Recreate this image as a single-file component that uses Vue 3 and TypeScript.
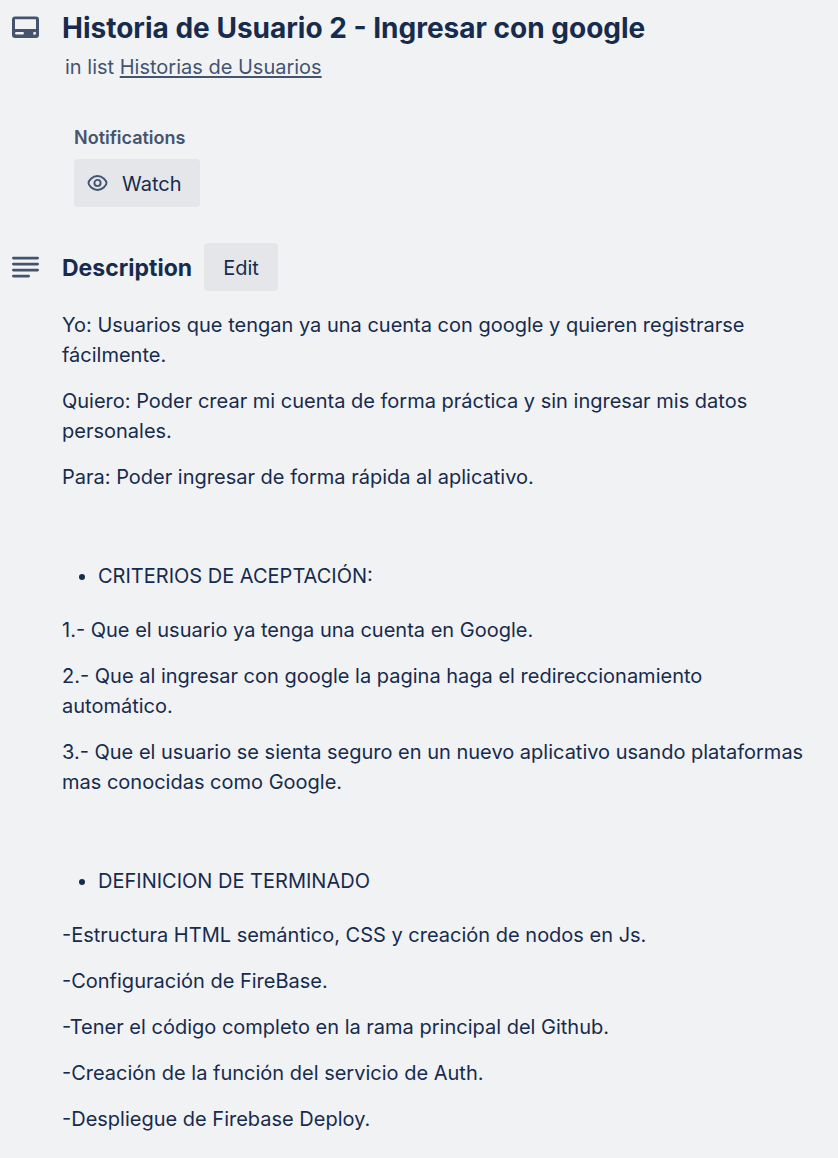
<script setup lang="ts">
const story: string[] = [
  'Yo: Usuarios que tengan ya una cuenta con google y quieren registrarse fácilmente.',
  'Quiero: Poder crear mi cuenta de forma práctica y sin ingresar mis datos personales.',
  'Para: Poder ingresar de forma rápida al aplicativo.',
]
const criteria: string[] = [
  '1.- Que el usuario ya tenga una cuenta en Google.',
  '2.- Que al ingresar con google la pagina haga el redireccionamiento automático.',
  '3.- Que el usuario se sienta seguro en un nuevo aplicativo usando plataformas mas conocidas como Google.',
]
const done: string[] = [
  '-Estructura HTML semántico, CSS y creación de nodos en Js.',
  '-Configuración de FireBase.',
  '-Tener el código completo en la rama principal del Github.',
  '-Creación de la función del servicio de Auth.',
  '-Despliegue de Firebase Deploy.',
]
</script>

<template>
  <main class="card">
    <header class="row">
      <svg class="icon title-icon" viewBox="0 0 28 24" aria-hidden="true">
        <path
          fill="currentColor"
          fill-rule="evenodd"
          d="M3 1.600H24Q27 1.600 27 4.600V19.900Q27 22.900 24 22.900H3Q0 22.900 0 19.900V4.600Q0 1.600 3 1.600ZM3 4.300V14H24V4.300ZM4.400 17Q3 17 3 18.300T4.400 19.600H10.600Q12 19.600 12 18.300T10.600 17ZM22.600 16.800A1.500 1.500 0 1 0 22.600 19.800A1.500 1.500 0 1 0 22.600 16.800Z"
        />
      </svg>
      <div>
        <h1>Historia de Usuario 2 - Ingresar con google</h1>
        <p class="list">in list <a href="#">Historias de Usuarios</a></p>
      </div>
    </header>

    <section class="notifications">
      <h3>Notifications</h3>
      <button type="button" class="button watch">
        <svg viewBox="0 0 22 18" aria-hidden="true">
          <path
            d="M2.500 8C2.500 6 6.200 1 11.500 1S20.500 6 20.500 8S16.800 15 11.500 15S2.500 10 2.500 8Z"
            fill="none"
            stroke="currentColor"
            stroke-width="1.900"
          />
          <circle cx="11.500" cy="8" r="3.100" fill="none" stroke="currentColor" stroke-width="1.900" />
        </svg>
        Watch
      </button>
    </section>

    <section>
      <div class="row heading">
        <svg class="icon" viewBox="0 0 28 24" aria-hidden="true">
          <path d="M1.400 3.100H25.600M1.400 9.100H25.600M1.400 15.100H25.600M1.400 21.100H16.600" stroke="currentColor" stroke-width="2.800" stroke-linecap="round" />
        </svg>
        <h2>Description</h2>
        <button type="button" class="button edit">Edit</button>
      </div>
      <div class="body">
        <p v-for="text in story" :key="text">{{ text }}</p>
        <ul><li>CRITERIOS DE ACEPTACIÓN:</li></ul>
        <p v-for="text in criteria" :key="text">{{ text }}</p>
        <ul><li>DEFINICION DE TERMINADO</li></ul>
        <p v-for="text in done" :key="text">{{ text }}</p>
      </div>
    </section>
  </main>
</template>

<style>
body {
  margin: 0;
  background: #f1f2f4;
}
</style>

<style scoped>
.card {
  box-sizing: border-box;
  min-height: 100vh;
  padding: 8px 24px 8px 12px;
  background: #f1f2f4;
  color: #172b4d;
  font: 20px/30px Inter, sans-serif;
}
h1, h2, h3, p, ul { margin: 0; }
.row { display: flex; }
.icon {
  flex: none;
  width: 28px;
  height: 24px;
  margin-right: 22px;
  color: #44546f;
}
.title-icon { margin-top: 7px; }
h1 {
  font-size: 28px;
  line-height: 40px;
  font-weight: 700;
}
.list {
  padding-left: 3px;
  margin-top: 4px;
  color: #44546f;
}
.list a {
  color: inherit;
  text-decoration: underline 2px;
  text-underline-offset: 2px;
}
.notifications {
  padding: 41px 0 0 62px;
}
h3 {
  font-size: 18px;
  line-height: 30px;
  font-weight: 600;
  color: #44546f;
}
.button {
  box-sizing: border-box;
  display: inline-flex;
  align-items: center;
  justify-content: center;
  height: 48px;
  padding: 2px 18px 0;
  border: 0;
  border-radius: 4px;
  background: #e4e6ea;
  color: #172b4d;
  font: inherit;
}
.watch {
  margin-top: 6px;
  padding-left: 12px;
}
.watch svg {
  width: 22px;
  height: 18px;
  margin-right: 14px;
  color: #44546f;
}
.edit { min-width: 74px; }
.heading {
  align-items: center;
  margin-top: 36px;
}
h2 {
  padding-top: 2px;
  margin-right: 12px;
  font-size: 23px;
  font-weight: 700;
}
.body { padding: 19px 0 0 50px; }
.body p { margin-bottom: 16px; }
.body ul {
  padding-left: 36px;
  margin: 69px 0 24px;
}
</style>
